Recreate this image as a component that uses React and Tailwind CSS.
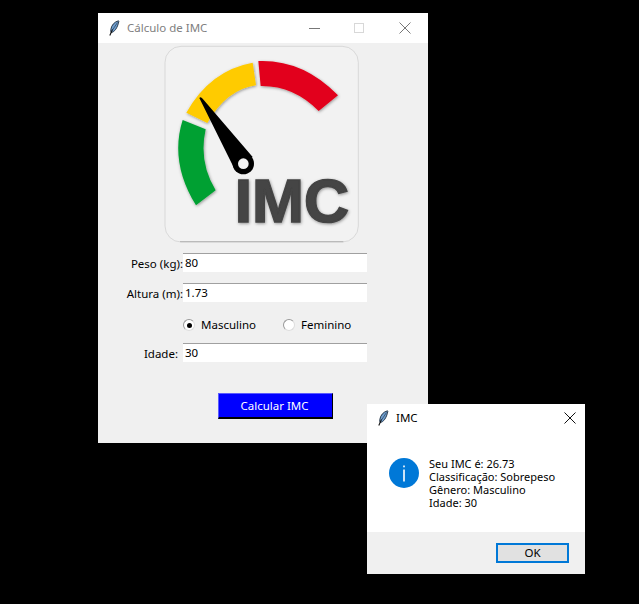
const FONT = "font-['Noto_Sans','Open_Sans',sans-serif]";

function Feather({ className }) {
  return (
    <svg viewBox="0 0 12 16" className={className}>
      <path d="M10.5 0.8C6.5 1.8 3.5 5 2.8 9.5C2.6 11 2.8 12 3.2 12.6C6.5 12 9.5 8 10.8 1.5Z" fill="#6f9fd0" stroke="#1c2a3a" strokeWidth="0.9" />
      <path d="M9.5 2.5L4.5 10" stroke="#1c2a3a" strokeWidth="0.6" />
      <path d="M4.5 9.5L1.8 15.5" stroke="#111" strokeWidth="1.1" />
    </svg>
  );
}

function Gauge() {
  return (
    <svg viewBox="0 0 612 612" className="w-[204px] h-[204px]">
      <defs>
        <filter id="soft" x="-10%" y="-10%" width="120%" height="120%">
          <feDropShadow dx="2" dy="3" stdDeviation="5" floodColor="#000" floodOpacity="0.4" />
        </filter>
      </defs>
      <rect x="15" y="13" width="580" height="587" rx="48" fill="#f2f2f2" stroke="#cccccc" strokeWidth="2" />
      <path d="M60 599H550" stroke="#999" strokeWidth="2" />
      <g filter="url(#soft)">
        <path d="M295 57Q430 52 534 160L476 207Q400 130 302 132Z" fill="#e2001a" />
        <path d="M278 62Q150 85 79 212L142 243Q200 142 288 130Z" fill="#ffcb05" />
        <path d="M68 234Q28 360 108 490L167 445Q115 360 137 262Z" fill="#00a032" />
        <text x="224" y="539" textLength="343" lengthAdjust="spacingAndGlyphs" fontFamily="'Liberation Sans',sans-serif" fontWeight="700" fontSize="186" fill="#444444" stroke="#444444" strokeWidth="5">IMC</text>
      </g>
      <path d="M118 168Q122 162 128 170L278 345L222 378Z" fill="#000" />
      <circle cx="250" cy="365" r="32" fill="#000" />
      <circle cx="250" cy="365" r="16" fill="#f2f2f2" />
    </svg>
  );
}

function Field({ label, value, labelClass = "" }) {
  return (
    <div className="flex items-center h-[19px]">
      <span className={`w-[85px] text-right text-[11.5px] text-black leading-none pt-[2px] ${labelClass}`}>{label}</span>
      <div className="w-[184px] h-[19px] bg-white border-t border-[#a0a0a0] pl-[2px] text-[11.5px] leading-[17px] text-black">{value}</div>
    </div>
  );
}

function Radio({ label, checked }) {
  return (
    <div className="flex items-center gap-[6px]">
      <span className="w-[12px] h-[12px] rounded-full bg-white border border-[#999] border-r-[#ddd] border-b-[#ddd] flex items-center justify-center">
        {checked && <span className="w-[5px] h-[5px] rounded-full bg-black" />}
      </span>
      <span className="text-[11.5px] leading-none text-black">{label}</span>
    </div>
  );
}

export default function App() {
  return (
    <div className={`relative w-[639px] h-[604px] bg-black overflow-hidden ${FONT}`}>
      {/* main window */}
      <div className="absolute left-[98px] top-[13px] w-[330px] h-[430px] bg-[#f0f0f0] flex flex-col">
        <div className="h-[30px] bg-white flex items-center shrink-0">
          <Feather className="w-[12px] h-[16px] ml-[10px]" />
          <span className="ml-[7px] text-[11.5px] text-[#808080]">Cálculo de IMC</span>
          <div className="ml-auto flex items-center">
            <span className="w-[11px] h-px bg-[#777] mr-[34px]" />
            <span className="w-[10px] h-[10px] border border-[#d8d8d8] mr-[35px]" />
            <svg viewBox="0 0 12 12" className="w-[12px] h-[12px] mr-[17px]">
              <path d="M0.5 0.5L11.5 11.5M11.5 0.5L0.5 11.5" stroke="#777" strokeWidth="1" />
            </svg>
          </div>
        </div>
        <div className="ml-[62px] -mt-[1px]">
          <Gauge />
        </div>
        <div className="mt-[7px] flex flex-col">
          <Field label="Peso (kg):" value="80" />
          <div className="h-[11px]" />
          <Field label="Altura (m):" value="1.73" />
          <div className="ml-[85px] mt-[16px] h-[14px] flex items-center">
            <Radio label="Masculino" checked />
            <div className="ml-[27px]"><Radio label="Feminino" /></div>
          </div>
          <div className="h-[11px]" />
          <Field label="Idade:" value="30" labelClass="pr-[5px]" />
        </div>
        <button className="ml-[120px] mt-[31px] w-[115px] h-[26px] bg-[#0000ff] text-white text-[11.5px] pr-[2px] border-t border-l border-[#5a5aff] border-b-2 border-r border-b-black border-r-black">
          Calcular IMC
        </button>
      </div>

      {/* message box */}
      <div className="absolute left-[367px] top-[404px] w-[218px] h-[170px] bg-white flex flex-col">
        <div className="h-[28px] flex items-center shrink-0">
          <Feather className="w-[12px] h-[16px] ml-[10px]" />
          <span className="ml-[7px] text-[11.5px] text-black">IMC</span>
          <svg viewBox="0 0 12 12" className="w-[12px] h-[12px] ml-auto mr-[9px]">
            <path d="M0.5 0.5L11.5 11.5M11.5 0.5L0.5 11.5" stroke="#111" strokeWidth="1" />
          </svg>
        </div>
        <div className="flex-1 flex pl-[22px] pt-[26px]">
          <svg viewBox="0 0 30 30" className="w-[30px] h-[30px] shrink-0">
            <circle cx="15" cy="15" r="15" fill="#0078d7" />
            <rect x="14.2" y="11.5" width="1.6" height="12" fill="#fff" />
            <rect x="14.2" y="7.5" width="1.6" height="1.8" fill="#fff" />
          </svg>
          <div className="ml-[10px] -mt-[1px] text-[11px] leading-[13px] text-black whitespace-nowrap">
            <div>Seu IMC é: 26.73</div>
            <div>Classificação: Sobrepeso</div>
            <div>Gênero: Masculino</div>
            <div>Idade: 30</div>
          </div>
        </div>
        <div className="h-[42px] bg-[#f0f0f0] flex items-center justify-end pr-[16px]">
          <button className="w-[73px] h-[20px] bg-[#e1e1e1] border-2 border-[#0078d7] text-[11.5px] leading-none text-black">OK</button>
        </div>
      </div>
    </div>
  );
}
